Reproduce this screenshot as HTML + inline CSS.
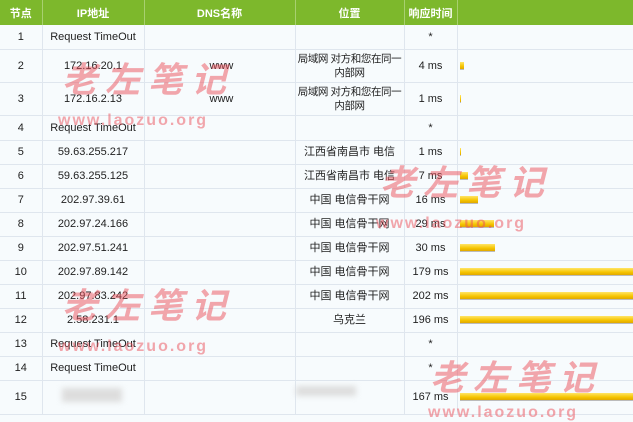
<!DOCTYPE html><html><head><meta charset="utf-8"><style>
body{margin:0;width:633px;height:414px;overflow:hidden;background:#f7fbfd;font-family:"Liberation Sans","Noto Sans CJK SC",sans-serif;font-size:11px;color:#222;position:relative}
table{border-collapse:collapse;table-layout:fixed;width:640px;position:absolute;left:0;top:0}
th{background:#7db82c;color:#fff;font-weight:bold;height:25px;padding:0;border-right:1px solid #a8d070;font-size:11px}
td{text-align:center;padding:0;border-right:1px solid #dfe6ee;border-bottom:1px solid #dfe6ee;line-height:14px}
td.l{padding:0;white-space:nowrap;letter-spacing:-0.4px;font-size:10.5px}
td.b{text-align:left;padding-left:2px;border-right:none}
.bar{height:7px;background:linear-gradient(#ffe566,#f5c400 60%,#e0a800);border-bottom:1px solid #bbb}
.wm{position:absolute;color:rgba(235,80,90,.5);font-weight:bold;white-space:nowrap}
.c{font-size:35px;letter-spacing:8px;font-family:"Noto Sans CJK SC",sans-serif;font-style:italic}
.u{font-size:16px;letter-spacing:2px}
.blur{position:absolute;background:#ddd;filter:blur(3px)}
</style></head><body>
<table>
<col style="width:42px"><col style="width:102px"><col style="width:151px"><col style="width:109px"><col style="width:53px"><col>
<tr><th>节点</th><th>IP地址</th><th>DNS名称</th><th>位置</th><th>响应时间</th><th style="border:none"></th></tr>
<tr style="height:24px"><td>1</td><td>Request TimeOut</td><td></td><td></td><td>*</td><td class="b"></td></tr>
<tr style="height:33px"><td>2</td><td>172.16.20.1</td><td style="text-align:left;padding-left:65px">www</td><td class="l">局域网 对方和您在同一<br>内部网</td><td>4 ms</td><td class="b"><div class="bar" style="width:4px"></div></td></tr>
<tr style="height:33px"><td>3</td><td>172.16.2.13</td><td style="text-align:left;padding-left:65px">www</td><td class="l">局域网 对方和您在同一<br>内部网</td><td>1 ms</td><td class="b"><div class="bar" style="width:1px"></div></td></tr>
<tr style="height:25px"><td>4</td><td>Request TimeOut</td><td></td><td></td><td>*</td><td class="b"></td></tr>
<tr style="height:24px"><td>5</td><td>59.63.255.217</td><td></td><td>江西省南昌市 电信</td><td>1 ms</td><td class="b"><div class="bar" style="width:1px"></div></td></tr>
<tr style="height:24px"><td>6</td><td>59.63.255.125</td><td></td><td>江西省南昌市 电信</td><td>7 ms</td><td class="b"><div class="bar" style="width:8px"></div></td></tr>
<tr style="height:24px"><td>7</td><td>202.97.39.61</td><td></td><td>中国 电信骨干网</td><td>16 ms</td><td class="b"><div class="bar" style="width:18px"></div></td></tr>
<tr style="height:24px"><td>8</td><td>202.97.24.166</td><td></td><td>中国 电信骨干网</td><td>29 ms</td><td class="b"><div class="bar" style="width:34px"></div></td></tr>
<tr style="height:24px"><td>9</td><td>202.97.51.241</td><td></td><td>中国 电信骨干网</td><td>30 ms</td><td class="b"><div class="bar" style="width:35px"></div></td></tr>
<tr style="height:24px"><td>10</td><td>202.97.89.142</td><td></td><td>中国 电信骨干网</td><td>179 ms</td><td class="b"><div class="bar" style="width:200px"></div></td></tr>
<tr style="height:24px"><td>11</td><td>202.97.83.242</td><td></td><td>中国 电信骨干网</td><td>202 ms</td><td class="b"><div class="bar" style="width:200px"></div></td></tr>
<tr style="height:24px"><td>12</td><td>2.58.231.1</td><td></td><td>乌克兰</td><td>196 ms</td><td class="b"><div class="bar" style="width:200px"></div></td></tr>
<tr style="height:24px"><td>13</td><td>Request TimeOut</td><td></td><td></td><td>*</td><td class="b"></td></tr>
<tr style="height:24px"><td>14</td><td>Request TimeOut</td><td></td><td></td><td>*</td><td class="b"></td></tr>
<tr style="height:34px"><td>15</td><td></td><td></td><td></td><td>167 ms</td><td class="b"><div class="bar" style="width:200px"></div></td></tr>
</table>
<div class="blur" style="left:62px;top:388px;width:60px;height:14px"></div>
<div class="blur" style="left:296px;top:386px;width:60px;height:10px"></div>
<div class="wm c" style="left:62px;top:52px">老左笔记</div>
<div class="wm u" style="left:58px;top:112px">www.laozuo.org</div>
<div class="wm c" style="left:380px;top:155px">老左笔记</div>
<div class="wm u" style="left:376px;top:215px">www.laozuo.org</div>
<div class="wm c" style="left:62px;top:278px">老左笔记</div>
<div class="wm u" style="left:58px;top:338px">www.laozuo.org</div>
<div class="wm c" style="left:430px;top:350px">老左笔记</div>
<div class="wm u" style="left:428px;top:404px">www.laozuo.org</div>
</body></html>
